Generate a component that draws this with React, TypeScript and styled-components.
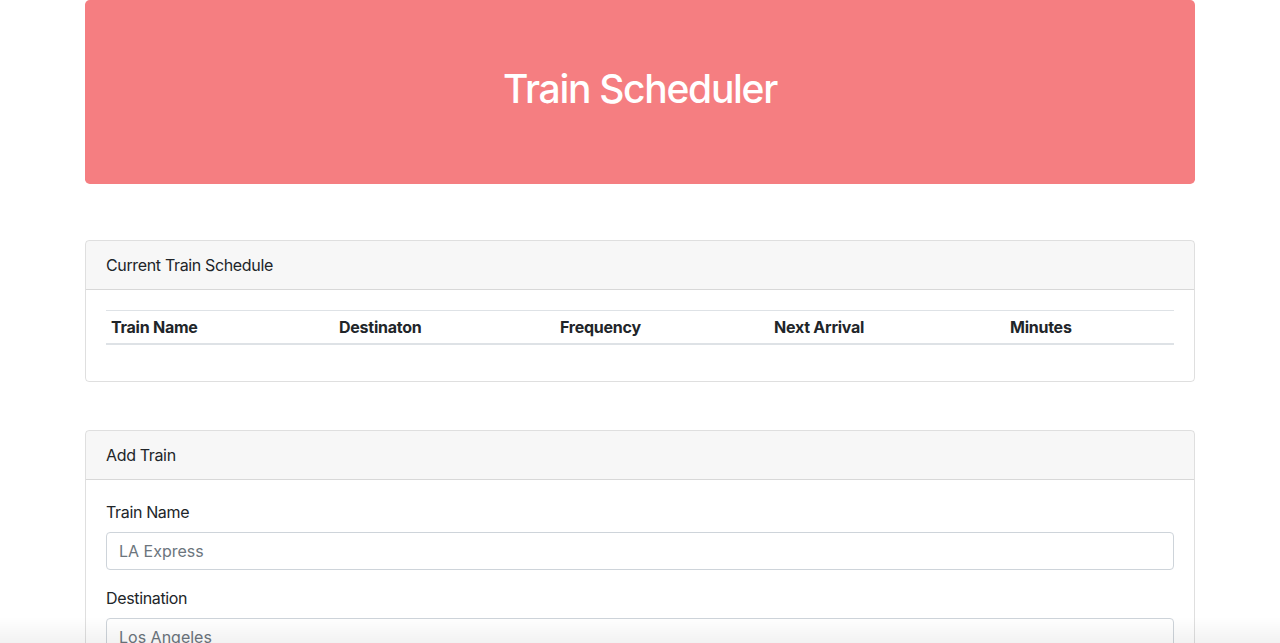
import { createGlobalStyle } from "styled-components";
import styled from "styled-components";

const GlobalStyle = createGlobalStyle`
  * { box-sizing: border-box; }
  body {
    margin: 0;
    font-family: Inter, "Liberation Sans", Arial, sans-serif;
    font-size: 16px;
    line-height: 1.5;
    letter-spacing: -0.35px;
    color: #212529;
    background: #fff;
  }
`;

const Container = styled.div`
  width: 1110px;
  margin: 0 auto;
`;

const Jumbotron = styled.header`
  background: #f57e81;
  border-radius: 4.8px;
  padding: 65px 32px 63px;
  margin-bottom: 56px;
  text-align: center;
`;

const Title = styled.h1`
  margin: 0 0 8px;
  font-size: 39px;
  font-weight: 500;
  line-height: 48px;
  color: #fff;
  letter-spacing: -1.3px;
`;

const Card = styled.section<{ $gap?: number }>`
  border: 1px solid rgba(0, 0, 0, 0.125);
  border-radius: 4px;
  margin-bottom: ${(p) => p.$gap ?? 0}px;
  overflow: hidden;
`;

const CardHeader = styled.div`
  padding: 12px 20px;
  background: rgba(0, 0, 0, 0.03);
  border-bottom: 1px solid rgba(0, 0, 0, 0.125);
  line-height: 24px;
`;

const CardBody = styled.div`
  padding: 20px;
`;

const Table = styled.table`
  width: 100%;
  border-collapse: collapse;
  margin-bottom: 16px;
`;

const Th = styled.th<{ $w: number }>`
  width: ${(p) => p.$w}px;
  text-align: left;
  font-weight: 700;
  padding: 4px 5px;
  line-height: 24px;
  letter-spacing: -0.25px;
  border-top: 1px solid #dee2e6;
  border-bottom: 2px solid #dee2e6;
`;

const FormGroup = styled.div`
  margin-bottom: 16px;
`;

const Label = styled.label`
  display: block;
  margin-bottom: 8px;
  line-height: 24px;
`;

const Input = styled.input`
  display: block;
  width: 100%;
  height: 38px;
  padding: 6px 12px;
  font: inherit;
  line-height: 24px;
  color: #495057;
  border: 1px solid #ced4da;
  border-radius: 4px;
  background: #fff;
  &::placeholder { color: #6c757d; }
`;

const BottomShade = styled.div`
  position: fixed;
  left: 0;
  right: 0;
  bottom: 0;
  height: 26px;
  pointer-events: none;
  background: linear-gradient(to bottom, rgba(0, 0, 0, 0), rgba(0, 0, 0, 0.05));
`;

const columns = [
  { label: "Train Name", w: 228 },
  { label: "Destinaton", w: 221 },
  { label: "Frequency", w: 214 },
  { label: "Next Arrival", w: 236 },
  { label: "Minutes", w: 169 },
];

const fields = [
  { label: "Train Name", placeholder: "LA Express" },
  { label: "Destination", placeholder: "Los Angeles" },
  { label: "First Train Time (HH:mm - military time)", placeholder: "05:35" },
  { label: "Frequency (min)", placeholder: "15" },
];

export default function App() {
  return (
    <>
      <GlobalStyle />
      <Container>
        <Jumbotron>
          <Title>Train Scheduler</Title>
        </Jumbotron>

        <Card $gap={48}>
          <CardHeader>Current Train Schedule</CardHeader>
          <CardBody>
            <Table>
              <thead>
                <tr>
                  {columns.map((c) => (
                    <Th key={c.label} $w={c.w}>
                      {c.label}
                    </Th>
                  ))}
                </tr>
              </thead>
              <tbody />
            </Table>
          </CardBody>
        </Card>

        <Card $gap={40}>
          <CardHeader>Add Train</CardHeader>
          <CardBody>
            {fields.map((f) => (
              <FormGroup key={f.label}>
                <Label>{f.label}</Label>
                <Input type="text" placeholder={f.placeholder} />
              </FormGroup>
            ))}
          </CardBody>
        </Card>
      </Container>
      <BottomShade />
    </>
  );
}
